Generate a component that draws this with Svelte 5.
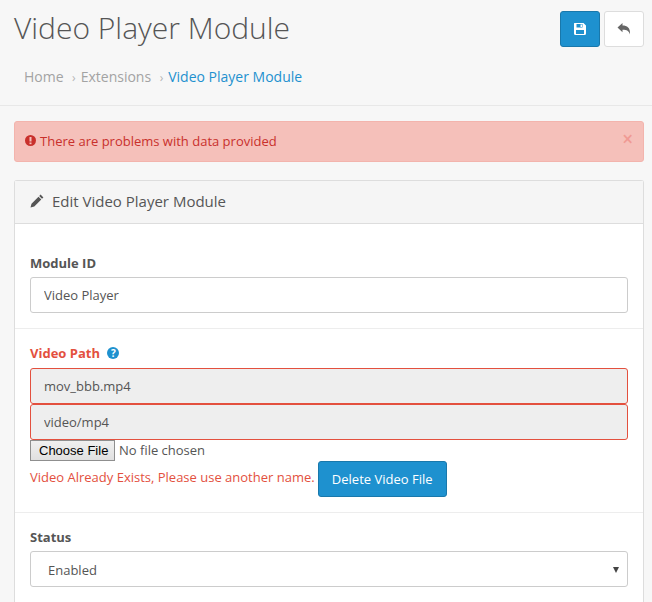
<script>
  let moduleId = 'Video Player';
  let status = 'Enabled';
</script>

<div class="page">
  <header class="page-header">
    <div class="title-row">
      <h1>Video Player Module</h1>
      <div class="actions">
        <button class="btn btn-primary icon-btn" aria-label="Save">
          <svg width="14" height="14" viewBox="0 0 14 14">
            <path fill="#fff" fill-rule="evenodd" d="M1.500 1H10.500L13 3.500V11.500Q13 13 11.500 13H2.500Q1 13 1 11.500V1.500Q1 1 1.500 1ZM3.500 2V5.500H9.500V2ZM7.500 2.500H9V5H7.500ZM3 8V12H11V8Z" />
          </svg>
        </button>
        <button class="btn btn-default icon-btn" aria-label="Back">
          <svg width="14" height="14" viewBox="0 0 14 14">
            <path fill="#666" d="M0.500 5.500L5.500 1V3.500C10 3.500 13.500 5.500 13 12.500C12 9 10 7.800 5.500 7.800V10.200Z" />
          </svg>
        </button>
      </div>
    </div>
    <ul class="breadcrumb">
      <li>Home</li>
      <li><span class="sep">›</span>Extensions</li>
      <li class="current"><span class="sep">›</span>Video Player Module</li>
    </ul>
  </header>

  <div class="content">
    <div class="alert">
      <svg class="alert-icon" width="11" height="11" viewBox="0 0 11 11">
        <circle cx="5.500" cy="5.500" r="5.500" fill="#c9302c" />
        <rect x="4.500" y="2" width="2" height="4.500" fill="#f5c0ba" />
        <rect x="4.500" y="7.500" width="2" height="1.700" fill="#f5c0ba" />
      </svg>
      <span>There are problems with data provided</span>
      <span class="close">×</span>
    </div>

    <section class="panel">
      <div class="panel-heading">
        <svg width="14" height="14" viewBox="0 0 14 14">
          <path fill="#555" d="M10.600 0.600L13.400 3.400L12 4.800L9.200 2ZM8.500 2.700L11.300 5.500L4.300 12.500L0.500 13.500L1.500 9.700Z" />
        </svg>
        <span>Edit Video Player Module</span>
      </div>
      <div class="panel-body">
        <div class="form-group">
          <label for="module-id">Module ID</label>
          <input id="module-id" class="form-control" bind:value={moduleId} />
        </div>

        <div class="form-group has-error">
          <label for="video-path">
            Video Path
            <span class="help">?</span>
          </label>
          <input id="video-path" class="form-control" value="mov_bbb.mp4" readonly />
          <input class="form-control" value="video/mp4" readonly aria-label="Video type" />
          <input class="file" type="file" aria-label="Video file" />
          <div class="error-row">
            <span class="error-text">Video Already Exists, Please use another name.</span>
            <button class="btn btn-primary delete-btn">Delete Video File</button>
          </div>
        </div>

        <div class="form-group last">
          <label for="status">Status</label>
          <div class="select-wrap">
            <select id="status" class="form-control" bind:value={status}>
              <option>Enabled</option>
              <option>Disabled</option>
            </select>
            <span class="caret"></span>
          </div>
        </div>
      </div>
    </section>
  </div>
</div>

<style>
  :global(html), :global(body) {
    height: 602px;
    overflow: hidden;
  }

  :global(body) {
    background: #f7f7f7;
    font-family: "Open Sans", sans-serif;
    font-size: 13px;
    color: #555;
  }

  .page {
    width: 652px;
  }

  .page-header {
    height: 106px;
    box-sizing: border-box;
    border-bottom: 1px solid #e8e8e8;
    padding: 11px 8px 0 14px;
  }

  .title-row {
    display: flex;
    justify-content: space-between;
    align-items: flex-start;
  }

  h1 {
    margin: 0;
    font-size: 30px;
    font-weight: 300;
    line-height: 34px;
    color: #555;
  }

  .actions {
    display: flex;
    gap: 4px;
  }

  .btn {
    box-sizing: border-box;
    font-family: inherit;
    font-size: 13px;
    border-radius: 3px;
    padding: 0;
    cursor: pointer;
  }

  .btn-primary {
    background: #1e91cf;
    border: 1px solid #1978ab;
    color: #fff;
  }

  .btn-default {
    background: #fff;
    border: 1px solid #ddd;
  }

  .icon-btn {
    width: 40px;
    height: 36px;
    display: flex;
    align-items: center;
    justify-content: center;
  }

  .breadcrumb {
    list-style: none;
    margin: 20px 0 0;
    padding: 0 0 0 10px;
    display: flex;
    font-size: 14px;
    line-height: 20px;
    color: #a3a3a3;
  }

  .sep {
    margin: 0 5px 0 8.500px;
    color: #b5b5b5;
    font-size: 12px;
  }

  .current {
    color: #1e91cf;
  }

  .content {
    padding: 15px 8px 0 14px;
  }

  .alert {
    height: 41px;
    box-sizing: border-box;
    display: flex;
    align-items: center;
    gap: 4px;
    padding: 0 10px 2px;
    background: #f5c0ba;
    border: 1px solid #f3b4ad;
    border-radius: 3px;
    color: #c9302c;
    font-size: 13px;
  }

  .alert-icon {
    flex: none;
  }

  .close {
    margin-left: auto;
    font-size: 19px;
    line-height: 20px;
    color: #f09a94;
    font-weight: 600;
    margin-top: -4px;
  }

  .panel {
    margin-top: 18px;
    border: 1px solid #ddd;
    border-bottom: none;
    background: #fff;
    border-radius: 3px 3px 0 0;
  }

  .panel-heading {
    height: 43px;
    box-sizing: border-box;
    display: flex;
    align-items: center;
    gap: 8px;
    padding: 0 15px 2px;
    background: #f5f5f5;
    border-bottom: 1px solid #ddd;
    font-size: 15px;
    color: #555;
  }

  .panel-body {
    padding: 0 15px;
  }

  .form-group {
    padding: 29px 15px 15px;
    border-bottom: 1px solid #ededed;
    margin: 0 -15px;
  }

  .form-group.last {
    border-bottom: none;
    padding-top: 14px;
  }

  .form-group.has-error {
    padding-top: 14px;
    padding-bottom: 15px;
  }

  label {
    display: block;
    font-size: 13px;
    font-weight: 700;
    line-height: 20px;
    margin-bottom: 4px;
    color: #555;
  }

  .has-error label {
    color: #e3503e;
    margin-bottom: 5px;
  }

  .help {
    display: inline-block;
    width: 12px;
    height: 12px;
    margin-left: 4px;
    border-radius: 50%;
    background: #1e91cf;
    color: #fff;
    font-size: 10px;
    line-height: 12px;
    text-align: center;
    vertical-align: 1px;
  }

  .form-control {
    display: block;
    width: 100%;
    height: 36px;
    box-sizing: border-box;
    padding: 0 13px;
    font-family: inherit;
    font-size: 13px;
    color: #555;
    background: #fff;
    border: 1px solid #ccc;
    border-radius: 3px;
    outline: none;
  }

  .has-error .form-control {
    background: #eee;
    border-color: #e3503e;
  }

  .file {
    display: block;
    height: 21px;
    font-family: "Open Sans", sans-serif;
    font-size: 13px;
    color: #555;
  }

  .file::file-selector-button {
    font-family: "Liberation Sans", sans-serif;
    font-size: 13px;
    color: #000;
    height: 21px;
    width: 85px;
    padding: 1px 6px 1px 8px;
    margin-right: 4px;
    background: linear-gradient(#f0f0f0, #e0e0e0);
    border: 1px solid #8f8f8f;
    border-radius: 0;
  }

  .error-row {
    display: flex;
    align-items: center;
    gap: 3px;
  }

  .error-text {
    color: #e3503e;
    font-size: 13px;
    position: relative;
    top: -2px;
  }

  .delete-btn {
    width: 129px;
    height: 36px;
  }

  .select-wrap {
    position: relative;
  }

  select.form-control {
    appearance: none;
    padding: 2px 13px 0 17px;
  }

  .caret {
    position: absolute;
    right: 9px;
    top: 16px;
    width: 0;
    height: 0;
    border-left: 3px solid transparent;
    border-right: 3px solid transparent;
    border-top: 6px solid #444;
    pointer-events: none;
  }
</style>
